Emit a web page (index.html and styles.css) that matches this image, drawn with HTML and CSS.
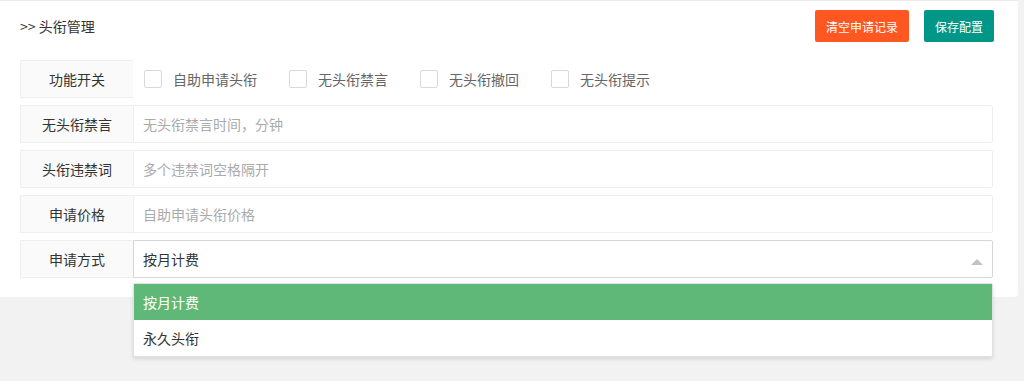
FILE: index.html
```html
<!DOCTYPE html>
<html lang="zh-CN">
<head>
    <meta charset="UTF-8">
    <meta name="viewport" content="width=device-width, initial-scale=1.0">
    <title>头衔管理</title>
    <link rel="stylesheet" href="styles.css">
</head>
<body>
<div class="card">
    <div class="card-header">
        <span class="card-title">&gt;&gt; 头衔管理</span>
        <div class="btn-group">
            <button class="btn btn-warm" type="button">清空申请记录</button>
            <button class="btn btn-main" type="button">保存配置</button>
        </div>
    </div>
    <form class="title-form">
        <div class="form-item">
            <label class="form-label">功能开关</label>
            <div class="check-group">
                <label class="check-item"><span class="check-box"></span>自助申请头衔</label>
                <label class="check-item"><span class="check-box"></span>无头衔禁言</label>
                <label class="check-item"><span class="check-box"></span>无头衔撤回</label>
                <label class="check-item"><span class="check-box"></span>无头衔提示</label>
            </div>
        </div>
        <div class="form-item">
            <label class="form-label" for="mute-time">无头衔禁言</label>
            <input class="form-input" type="text" id="mute-time" placeholder="无头衔禁言时间，分钟">
        </div>
        <div class="form-item">
            <label class="form-label" for="ban-words">头衔违禁词</label>
            <input class="form-input" type="text" id="ban-words" placeholder="多个违禁词空格隔开">
        </div>
        <div class="form-item">
            <label class="form-label" for="price">申请价格</label>
            <input class="form-input" type="text" id="price" placeholder="自助申请头衔价格">
        </div>
        <div class="form-item">
            <label class="form-label">申请方式</label>
            <div class="select">
                <div class="select-title">
                    <span>按月计费</span>
                    <i class="select-arrow"></i>
                </div>
                <dl class="select-menu">
                    <dd class="selected">按月计费</dd>
                    <dd>永久头衔</dd>
                </dl>
            </div>
        </div>
    </form>
</div>
</body>
</html>
```

FILE: styles.css
```css
html {
    background: #f2f2f2;
}

body {
    margin: 0;
    min-height: 100vh;
    background: #f2f2f2;
    font-family: "Noto Sans CJK SC", "Noto Sans", sans-serif;
    font-size: 14px;
    color: #333;
}

.card {
    width: 1018px;
    box-sizing: border-box;
    background: #fff;
    border-top: 1px solid #ececec;
    border-radius: 0 0 4px 0;
    padding: 9px 24px 19px 20px;
}

.card-header {
    display: flex;
    justify-content: space-between;
    align-items: center;
    height: 32px;
}

.card-title {
    font-size: 14px;
    color: #333;
}

.btn-group {
    display: flex;
    gap: 15px;
}

.btn {
    height: 32px;
    padding: 0 11px;
    border: none;
    border-radius: 2px;
    color: #fff;
    font-family: inherit;
    font-size: 12px;
    cursor: pointer;
}

.btn-warm {
    background: #ff5722;
}

.btn-main {
    background: #009688;
}

.title-form {
    margin-top: 18px;
    margin-right: 1px;
    display: flex;
    flex-direction: column;
    gap: 7px;
}

.form-item {
    display: flex;
    height: 38px;
}

.form-label {
    width: 113px;
    box-sizing: border-box;
    flex-shrink: 0;
    display: flex;
    align-items: center;
    justify-content: center;
    background: #fafafa;
    border: 1px solid #eee;
    border-right: none;
    border-radius: 2px 0 0 2px;
    color: #333;
}

.form-input {
    flex: 1;
    box-sizing: border-box;
    height: 38px;
    margin: 0;
    padding: 0 9px;
    border: 1px solid #eee;
    border-radius: 0 2px 2px 0;
    font-family: inherit;
    font-size: 14px;
    color: #333;
    outline: none;
}

.form-input::placeholder {
    color: #aaa;
}

.check-group {
    display: flex;
    align-items: center;
    padding-left: 11px;
}

.check-item {
    display: flex;
    align-items: center;
    gap: 11px;
    margin-right: 32px;
    color: #666;
}

.check-box {
    width: 18px;
    height: 18px;
    box-sizing: border-box;
    border: 1px solid #d9d9d9;
    border-radius: 2px;
    background: #fff;
}

.select {
    flex: 1;
    position: relative;
}

.select-title {
    height: 38px;
    box-sizing: border-box;
    display: flex;
    align-items: center;
    padding: 0 9px;
    border: 1px solid #d6d6d6;
    border-radius: 0 2px 2px 0;
    color: #333;
}

.select-arrow {
    position: absolute;
    right: 10px;
    top: 13px;
    width: 0;
    height: 0;
    border: 6px solid transparent;
    border-bottom-color: #c2c2c2;
}

.select-menu {
    position: absolute;
    top: 43px;
    left: 0;
    right: 0;
    margin: 0;
    padding: 0;
    background: #fff;
    border: 1px solid #e2e2e2;
    border-radius: 2px;
    box-shadow: 0 2px 4px rgba(0, 0, 0, 0.12);
    z-index: 10;
}

.select-menu dd {
    margin: 0;
    height: 36px;
    line-height: 36px;
    padding: 0 9px;
    color: #333;
}

.select-menu dd.selected {
    background: #5fb878;
    color: #fff;
}
```
